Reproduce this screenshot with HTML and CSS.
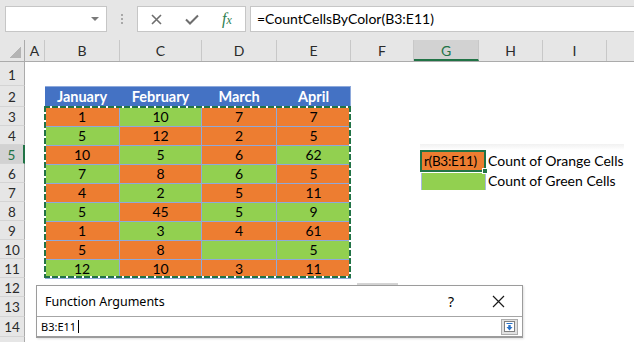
FILE: index.html
```html
<!DOCTYPE html>
<html lang="en">

<head>
    <meta charset="UTF-8">
    <meta name="viewport" content="width=device-width, initial-scale=1.0">
    <title>Count Cells By Color</title>
    <link rel="stylesheet" href="styles.css">
</head>

<body>
    <div class="formula-bar">
        <div class="name-box"><span class="name-arrow"></span></div>
        <div class="bar-dots"><span></span><span></span><span></span></div>
        <div class="bar-buttons">
            <svg class="btn-cancel" width="11" height="11" viewBox="0 0 11 11"><path d="M1 1L10 10M10 1L1 10" stroke="#6e6e6e" stroke-width="1.6" fill="none"/></svg>
            <svg class="btn-enter" width="14" height="11" viewBox="0 0 14 11"><path d="M1 5.5L5 9.5L13 1.5" stroke="#6e6e6e" stroke-width="2" fill="none"/></svg>
            <span class="fx">f<span class="fx-x">x</span></span>
        </div>
        <div class="formula-input">=CountCellsByColor(B3:E11)</div>
    </div>

    <div class="col-headers">
        <div class="corner"><span class="corner-mark"></span></div>
        <div class="col-head col-a">A</div>
        <div class="col-head col-b">B</div>
        <div class="col-head col-c">C</div>
        <div class="col-head col-d">D</div>
        <div class="col-head col-e">E</div>
        <div class="col-head col-f">F</div>
        <div class="col-head col-g selected">G</div>
        <div class="col-head col-h">H</div>
        <div class="col-head col-i">I</div>
        <div class="col-head col-j"></div>
    </div>

    <div class="sheet-body">
        <div class="row-headers">
            <div class="row-head row-1">1</div>
            <div class="row-head row-2">2</div>
            <div class="row-head">3</div>
            <div class="row-head">4</div>
            <div class="row-head selected">5</div>
            <div class="row-head">6</div>
            <div class="row-head">7</div>
            <div class="row-head">8</div>
            <div class="row-head">9</div>
            <div class="row-head">10</div>
            <div class="row-head">11</div>
            <div class="row-head">12</div>
            <div class="row-head row-tall">13</div>
            <div class="row-head row-tall">14</div>
            <div class="row-head"></div>
        </div>

        <div class="cells">
            <div class="data-table">
                <div class="cell head">January</div>
                <div class="cell head">February</div>
                <div class="cell head">March</div>
                <div class="cell head last">April</div>

                <div class="cell o">1</div><div class="cell g">10</div><div class="cell o">7</div><div class="cell o">7</div>
                <div class="cell g">5</div><div class="cell o">12</div><div class="cell o">2</div><div class="cell o">5</div>
                <div class="cell o">10</div><div class="cell g">5</div><div class="cell o">6</div><div class="cell g">62</div>
                <div class="cell g">7</div><div class="cell o">8</div><div class="cell g">6</div><div class="cell o">5</div>
                <div class="cell o">4</div><div class="cell g">2</div><div class="cell o">5</div><div class="cell o">11</div>
                <div class="cell g">5</div><div class="cell o">45</div><div class="cell g">5</div><div class="cell g">9</div>
                <div class="cell o">1</div><div class="cell g">3</div><div class="cell o">4</div><div class="cell o">61</div>
                <div class="cell o">5</div><div class="cell o">8</div><div class="cell g"></div><div class="cell g">5</div>
                <div class="cell g">12</div><div class="cell o">10</div><div class="cell o">3</div><div class="cell o">11</div>
            </div>

            <div class="result">
                <div class="result-row">
                    <div class="result-cell active">r(B3:E11)<span class="fill-handle"></span></div>
                    <div class="result-label">Count of Orange Cells</div>
                </div>
                <div class="result-row">
                    <div class="result-cell green"></div>
                    <div class="result-label">Count of Green Cells</div>
                </div>
            </div>

            <div class="marching-ants"></div>
        </div>
    </div>

    <div class="scroll-mark"></div>

    <div class="dialog">
        <div class="dialog-title">
            <span>Function Arguments</span>
            <span class="dialog-help">?</span>
            <svg class="dialog-close" width="13" height="13" viewBox="0 0 13 13"><path d="M1 1L12 12M12 1L1 12" stroke="#1a1a1a" stroke-width="1.2" fill="none"/></svg>
        </div>
        <div class="dialog-input">
            <span>B3:E11</span><span class="caret"></span>
            <span class="collapse-btn">
                <svg width="11" height="11" viewBox="0 0 11 11"><rect x="0.5" y="0.5" width="10" height="10" fill="#fff" stroke="#808080"/><path d="M2.5 2h6v1h-6z" fill="#2a72c8"/><path d="M5.5 9.5L2.5 6H4.3V4H6.7V6H8.5Z" fill="#2a72c8"/></svg>
            </span>
        </div>
    </div>
</body>

</html>
```

FILE: styles.css
```css
body {
    margin: 0;
    width: 634px;
    height: 342px;
    overflow: hidden;
    position: relative;
    font-family: Lato, "Liberation Sans", sans-serif;
    background-color: #fff;
    color: #000;
}

/* formula bar */

.formula-bar {
    display: flex;
    align-items: flex-start;
    height: 40px;
    padding-top: 6px;
    box-sizing: border-box;
    background-color: #e6e6e6;
}

.name-box {
    display: flex;
    align-items: center;
    justify-content: flex-end;
    width: 102px;
    height: 26px;
    margin-left: 5px;
    padding-right: 7px;
    box-sizing: border-box;
    background-color: #fff;
    border: 1px solid #c6c6c6;
}

.name-arrow {
    border-left: 4px solid transparent;
    border-right: 4px solid transparent;
    border-top: 4px solid #7a7a7a;
}

.bar-dots {
    display: flex;
    flex-direction: column;
    align-items: center;
    gap: 2px;
    width: 30px;
    padding-top: 8px;
}

.bar-dots span {
    width: 2px;
    height: 2px;
    background-color: #a8a8a8;
}

.bar-buttons {
    display: flex;
    align-items: center;
    width: 109px;
    height: 26px;
    box-sizing: border-box;
    background-color: #fff;
    border: 1px solid #c6c6c6;
}

.btn-cancel {
    margin-left: 13px;
}

.btn-enter {
    margin-left: 23px;
}

.fx {
    margin-left: 23px;
    font-family: "Liberation Serif", serif;
    font-style: italic;
    font-size: 16px;
    color: #2e8050;
}

.fx-x {
    font-size: 12px;
}

.formula-input {
    flex: 1;
    height: 26px;
    margin-left: 4px;
    padding-left: 6px;
    box-sizing: border-box;
    background-color: #fff;
    border: 1px solid #c6c6c6;
    border-right: none;
    font-size: 14px;
    line-height: 24px;
}

/* column headers */

.col-headers {
    display: flex;
    height: 22px;
    box-sizing: border-box;
    background-color: #e6e6e6;
    border-bottom: 1px solid #ababab;
}

.corner {
    display: flex;
    align-items: flex-end;
    justify-content: flex-end;
    width: 25px;
    padding: 0 3px 3px 0;
    box-sizing: border-box;
    border-right: 1px solid #ababab;
}

.corner-mark {
    width: 12px;
    height: 12px;
    background: linear-gradient(to top left, #b4b4b4 50%, transparent 50%);
}

.col-head {
    box-sizing: border-box;
    border-right: 1px solid #c8c8c8;
    text-align: center;
    font-size: 14px;
    line-height: 21px;
    color: #2b2b2b;
}

.col-head.selected {
    background-color: #d2d2d2;
    border-bottom: 2px solid #217346;
    color: #217346;
}

.col-a { width: 20px; }
.col-b { width: 75px; }
.col-c { width: 82px; }
.col-d { width: 75px; }
.col-e { width: 74px; }
.col-f { width: 63px; }
.col-g { width: 65px; }
.col-h { width: 64px; }
.col-i { width: 64px; }
.col-j { flex: 1; border-right: none; }

/* row headers */

.sheet-body {
    display: flex;
}

.row-headers {
    display: flex;
    flex-direction: column;
    width: 25px;
    background-color: #e6e6e6;
}

.row-head {
    height: 19px;
    box-sizing: border-box;
    border-right: 1px solid #ababab;
    border-bottom: 1px solid #d4d4d4;
    text-align: center;
    font-size: 13.5px;
    line-height: 20px;
    color: #2b2b2b;
}

.row-1 { height: 24px; line-height: 27px; }
.row-2 { height: 21px; line-height: 22px; }
.row-tall { height: 20px; }

.row-head.selected {
    background-color: #d2d2d2;
    border-right: 2px solid #217346;
    color: #217346;
}

/* worksheet cells */

.cells {
    display: flex;
    align-items: flex-start;
    position: relative;
    flex: 1;
    padding: 24px 0 0 20px;
}

.data-table {
    display: grid;
    grid-template-columns: 75px 82px 75px 74px;
    grid-template-rows: 21px repeat(9, 19px);
    border-top: 1px solid #8ea9db;
}

.cell {
    box-sizing: border-box;
    border-right: 1px solid #8ea9db;
    border-bottom: 1px solid #8ea9db;
    text-align: center;
    font-size: 14px;
    line-height: 18px;
}

.head {
    background-color: #4472c4;
    border-right-color: #4472c4;
    color: #fff;
    font-weight: bold;
    font-size: 14.5px;
    line-height: 19px;
}

.head.last {
    border-right-color: #8ea9db;
}

.o {
    background-color: #ed7d31;
}

.g {
    background-color: #92d050;
}

.marching-ants {
    position: absolute;
    left: 19px;
    top: 44px;
    width: 307px;
    height: 172px;
    pointer-events: none;
    background:
        repeating-linear-gradient(90deg, #217346 0 6px, #fff 6px 8px) top left / 100% 2px no-repeat,
        repeating-linear-gradient(90deg, #217346 0 6px, #fff 6px 8px) bottom left / 100% 2px no-repeat,
        repeating-linear-gradient(180deg, #217346 0 6px, #fff 6px 8px) top left / 2px 100% no-repeat,
        repeating-linear-gradient(180deg, #217346 0 6px, #fff 6px 8px) top right / 2px 100% no-repeat;
}

.result {
    margin: 58px 0 0 69px;
    padding-top: 6px;
    background: linear-gradient(#f1f1f1, #fff 6px) no-repeat;
    background-size: 210px 6px;
}

.result-row {
    display: flex;
    align-items: center;
}

.result-cell {
    width: 66px;
    box-sizing: border-box;
    font-size: 14px;
}

.result-cell.active {
    position: relative;
    height: 22px;
    padding-left: 2px;
    background-color: #ed7d31;
    border: 2px solid #217346;
    font-size: 13.5px;
    letter-spacing: -0.3px;
    line-height: 18px;
    white-space: nowrap;
}

.fill-handle {
    position: absolute;
    right: -4px;
    bottom: -4px;
    width: 4px;
    height: 4px;
    background-color: #217346;
    border: 1px solid #fff;
}

.result-cell.green {
    height: 17px;
    margin-left: 1px;
    width: 65px;
    background-color: #92d050;
    border-left: 1px solid #a9b9e0;
    border-right: 1px solid #a9b9e0;
}

.result-label {
    padding-left: 2px;
    font-size: 14px;
    line-height: 18px;
}

/* function arguments dialog */

.scroll-mark {
    position: absolute;
    left: 357px;
    top: 283px;
    width: 41px;
    height: 2px;
    background-color: #d4d4d4;
}

.dialog {
    position: absolute;
    left: 36px;
    top: 285px;
    width: 487px;
    height: 53px;
    box-sizing: border-box;
    background-color: #fff;
    border: 1px solid #9c9c9c;
    border-bottom-width: 2px;
    box-shadow: 1px 1px 2px rgba(0, 0, 0, 0.12);
}

.dialog-title {
    display: flex;
    align-items: center;
    height: 31px;
    padding: 0 17px 0 8px;
    box-sizing: border-box;
    border-bottom: 1px solid #a6a6a6;
    font-family: "Noto Sans", sans-serif;
    font-size: 12.5px;
}

.dialog-help {
    margin-left: auto;
    margin-right: 38px;
    font-size: 14px;
}

.dialog-input {
    display: flex;
    align-items: center;
    height: 19px;
    padding: 0 4px;
    font-family: "Noto Sans", sans-serif;
    font-size: 11px;
}

.caret {
    width: 1px;
    height: 13px;
    margin-left: 2px;
    background-color: #000;
}

.collapse-btn {
    display: flex;
    align-items: center;
    justify-content: center;
    width: 17px;
    height: 16px;
    margin-left: auto;
    box-sizing: border-box;
    background-color: #e1e1e1;
    border: 1px solid #adadad;
}
```
